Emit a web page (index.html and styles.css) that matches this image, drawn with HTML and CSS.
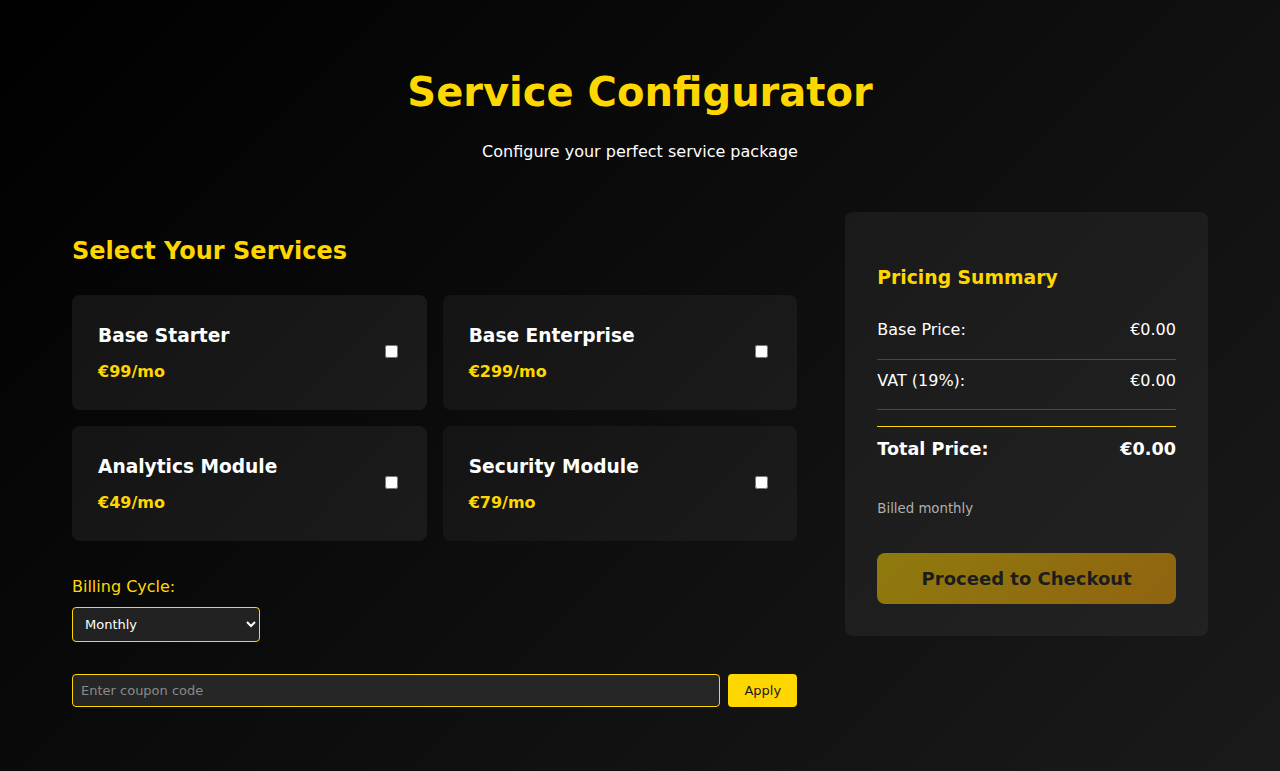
FILE: index.html
```html
<!DOCTYPE html>
<html lang="en">
<head>
<meta charset="utf-8">
<title>Service Configurator</title>
<link rel="stylesheet" href="styles.css">
</head>
<body>
<div class="container">
  <header class="header">
    <h1 class="title">Service Configurator</h1>
    <p class="subtitle">Configure your perfect service package</p>
  </header>
  <main class="layout">
    <section class="services">
      <h2 class="section-title">Select Your Services</h2>
      <div class="cards">
        <label class="card">
          <div class="card-info">
            <div class="card-name">Base Starter</div>
            <div class="card-price">€99/mo</div>
          </div>
          <input type="checkbox" class="card-check">
        </label>
        <label class="card">
          <div class="card-info">
            <div class="card-name">Base Enterprise</div>
            <div class="card-price">€299/mo</div>
          </div>
          <input type="checkbox" class="card-check">
        </label>
        <label class="card">
          <div class="card-info">
            <div class="card-name">Analytics Module</div>
            <div class="card-price">€49/mo</div>
          </div>
          <input type="checkbox" class="card-check">
        </label>
        <label class="card">
          <div class="card-info">
            <div class="card-name">Security Module</div>
            <div class="card-price">€79/mo</div>
          </div>
          <input type="checkbox" class="card-check">
        </label>
      </div>
      <div class="billing">
        <label class="billing-label">Billing Cycle:</label>
        <select class="billing-select">
          <option>Monthly</option>
          <option>Yearly</option>
        </select>
      </div>
      <div class="coupon">
        <input type="text" class="coupon-input" placeholder="Enter coupon code">
        <button class="coupon-btn">Apply</button>
      </div>
    </section>
    <aside class="summary">
      <h3 class="summary-title">Pricing Summary</h3>
      <div class="row">
        <span>Base Price:</span><span>€0.00</span>
      </div>
      <div class="row">
        <span>VAT (19%):</span><span>€0.00</span>
      </div>
      <div class="row total">
        <span>Total Price:</span><span>€0.00</span>
      </div>
      <p class="billed">Billed monthly</p>
      <button class="checkout" disabled>Proceed to Checkout</button>
    </aside>
  </main>
</div>
</body>
</html>
```
FILE: styles.css
```css
* { box-sizing: border-box; }
html, body { margin: 0; padding: 0; }
body {
  min-height: 100vh;
  font-family: "DejaVu Sans", Verdana, sans-serif;
  color: #fff;
  background: linear-gradient(135deg, #000 0%, #1a1a1a 100%);
}
.container {
  max-width: 1200px;
  margin: 0 auto;
  padding: 2rem;
}
.header {
  text-align: center;
  padding-top: 32px;
  margin-bottom: 49px;
}
.title {
  margin: 0;
  font-size: 40px;
  line-height: 56px;
  color: #ffd700;
  font-weight: bold;
}
.subtitle {
  margin: 21px 0 0;
  font-size: 16px;
  line-height: 22px;
  color: #fff;
}
.layout {
  display: grid;
  grid-template-columns: 2fr 1fr;
  gap: 48px;
  align-items: start;
}
.section-title {
  margin: 23px 0 28px;
  font-size: 24px;
  line-height: 32px;
  color: #ffd700;
}
.cards {
  display: grid;
  grid-template-columns: 1fr 1fr;
  gap: 16px;
}
.card {
  display: flex;
  align-items: center;
  justify-content: space-between;
  height: 115px;
  padding: 0 26px;
  border-radius: 8px;
  background: linear-gradient(135deg, #141414 0%, #1b1b1b 100%);
  cursor: pointer;
}
.card-name {
  font-size: 18.6px;
  font-weight: bold;
  line-height: 24px;
  color: #fff;
  margin-bottom: 14px;
}
.card-price {
  font-size: 16px;
  font-weight: bold;
  line-height: 20px;
  color: #ffd700;
}
.card-check {
  width: 13px;
  height: 13px;
  margin: 0 3px 2px 0;
}
.billing {
  margin-top: 35px;
}
.billing-label {
  display: block;
  font-size: 16px;
  line-height: 22px;
  color: #ffd700;
  margin-bottom: 9px;
}
.billing-select {
  width: 188px;
  height: 35px;
  padding: 0 8px;
  font-family: "DejaVu Sans", sans-serif;
  font-size: 13px;
  color: #fff;
  background: #222;
  border: 1px solid #ffd700;
  border-radius: 4px;
}
.coupon {
  display: flex;
  gap: 8px;
  margin-top: 32px;
}
.coupon-input {
  flex: 1;
  height: 33px;
  padding: 0 8px;
  font-family: "DejaVu Sans", sans-serif;
  font-size: 13px;
  color: #fff;
  background: #262626;
  border: 1px solid #ffd700;
  border-radius: 4px;
}
.coupon-input::placeholder { color: #8a8a8a; }
.coupon-btn {
  width: 69px;
  height: 33px;
  font-family: "DejaVu Sans", sans-serif;
  font-size: 13px;
  color: #1a1a1a;
  background: #ffd700;
  border: none;
  border-radius: 4px;
}
.summary {
  background: linear-gradient(135deg, #1a1a1a 0%, #222 100%);
  border-radius: 8px;
  padding: 32px;
}
.summary-title {
  margin: 22px 0 30px;
  font-size: 18.75px;
  line-height: 24px;
  color: #ffd700;
}
.row {
  display: flex;
  justify-content: space-between;
  font-size: 16px;
  line-height: 20px;
  color: #fff;
  padding-bottom: 19px;
  border-bottom: 1px solid rgba(255, 215, 0, 0.25);
  margin-bottom: 11px;
}
.row + .row {
  padding-bottom: 18px;
}
.row.total {
  border-bottom: none;
  border-top: 1px solid #ffd700;
  margin-top: 16px;
  padding-top: 11px;
  padding-bottom: 0;
  margin-bottom: 0;
  font-size: 17.6px;
  line-height: 22px;
  font-weight: bold;
}
.billed {
  margin: 40px 0 0;
  font-size: 13.3px;
  line-height: 18px;
  color: #b0b0b0;
}
.checkout {
  display: block;
  width: 100%;
  height: 51px;
  margin-top: 35px;
  font-family: "DejaVu Sans", sans-serif;
  font-size: 18px;
  font-weight: bold;
  color: #1a1a1a;
  background: linear-gradient(135deg, #ffd700 0%, #ffa500 100%);
  border: none;
  border-radius: 8px;
  opacity: 0.5;
}
```
